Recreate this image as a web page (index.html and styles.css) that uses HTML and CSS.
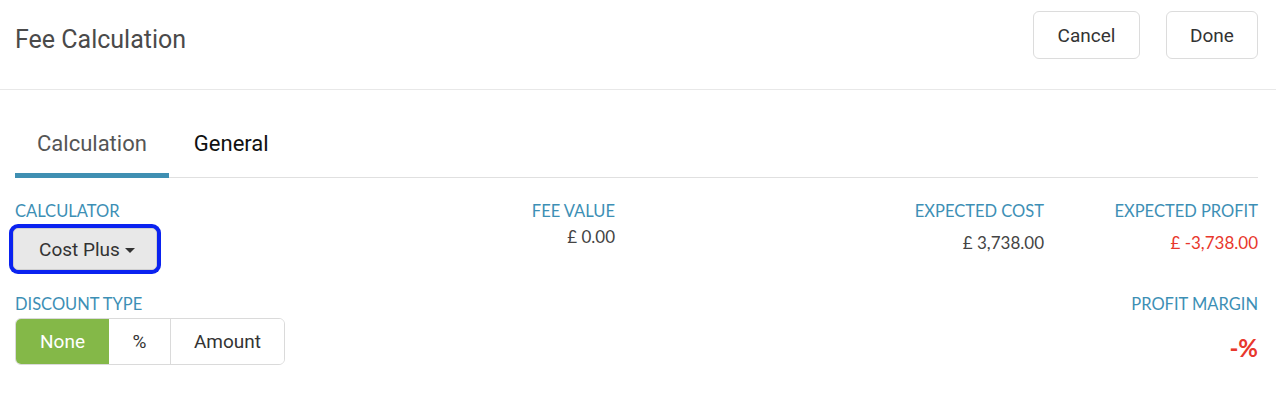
FILE: index.html
```html
<!DOCTYPE html>
<html>
<head>
<meta charset="utf-8">
<link rel="stylesheet" href="styles.css">
</head>
<body>
<header class="header">
  <h1 class="title">Fee Calculation</h1>
  <div class="actions">
    <button class="btn btn-cancel">Cancel</button>
    <button class="btn btn-done">Done</button>
  </div>
</header>
<main class="main">
  <nav class="tabs">
    <div class="tab active">Calculation</div>
    <div class="tab">General</div>
  </nav>
  <section class="grid">
    <div class="field calc">
      <div class="label">CALCULATOR</div>
      <button class="select">Cost Plus<span class="caret"></span></button>
    </div>
    <div class="field fee right">
      <div class="label">FEE VALUE</div>
      <div class="value value-fee">£ 0.00</div>
    </div>
    <div class="field cost right">
      <div class="label">EXPECTED COST</div>
      <div class="value value-low">£ 3,738.00</div>
    </div>
    <div class="field profit right">
      <div class="label">EXPECTED PROFIT</div>
      <div class="value value-low red">£ -3,738.00</div>
    </div>
    <div class="field discount">
      <div class="label">DISCOUNT TYPE</div>
      <div class="seg">
        <div class="seg-item seg-none on">None</div>
        <div class="seg-item seg-pct">%</div>
        <div class="seg-item seg-amt">Amount</div>
      </div>
    </div>
    <div class="field margin right">
      <div class="label">PROFIT MARGIN</div>
      <div class="margin-value">-%</div>
    </div>
  </section>
</main>
</body>
</html>
```
FILE: styles.css
```css
* { box-sizing: border-box; }
html, body { margin: 0; padding: 0; background: #fff; }
body { font-family: Roboto, "Noto Sans", sans-serif; color: #333; width: 1276px; }

.header {
  height: 90px;
  border-bottom: 1px solid #e8e8e8;
  display: flex;
  justify-content: space-between;
  align-items: flex-start;
  padding: 11px 18px 0 15px;
}
.title {
  margin: 13px 0 0 0;
  font-size: 25px;
  line-height: 32px;
  font-weight: 400;
  color: #4a4a4a;
}
.actions { display: flex; gap: 26px; }
.btn {
  font-family: Roboto, sans-serif;
  font-size: 19px;
  height: 48px;
  background: #fff;
  border: 1px solid #dcdcdc;
  border-radius: 6px;
  color: #333;
  padding: 0;
}
.btn-cancel { width: 107px; }
.btn-done { width: 92px; }

.main { padding: 0 18px 0 15px; }
.tabs {
  display: flex;
  border-bottom: 1px solid #e0e0e0;
}
.tab {
  font-size: 22px;
  line-height: 26px;
  padding: 41px 22px 16px 22px;
  border-bottom: 5px solid transparent;
  margin-bottom: -1px;
  color: #111;
}
.tab.active { color: #555; border-bottom-color: #3f8fb2; }
.tab + .tab { margin-left: 3px; }

.grid {
  display: grid;
  grid-template-columns: 300px 300px 1fr 214px;
  padding-top: 24px;
  font-family: Lato, "Noto Sans", sans-serif;
}
.right { text-align: right; }
.fee { grid-column: 2; }
.cost { grid-column: 3; }
.profit { grid-column: 4; }
.discount { grid-column: 1 / span 2; margin-top: 25px; }
.margin { grid-column: 4; margin-top: 25px; }

.label {
  font-size: 16.5px;
  line-height: 18px;
  color: #3d8fb5;
}
.value {
  font-size: 17px;
  line-height: 20px;
  color: #444;
}
.value-fee { margin-top: 7px; }
.value-low { margin-top: 13px; }
.red { color: #e8372c; }

.select {
  margin: 8px 0 0 -2px;
  width: 144px;
  height: 42px;
  background: #e8e8e8;
  border: 1px solid #cfcfcf;
  border-radius: 5px;
  box-shadow: 0 0 0 4px #0a22f0;
  font-family: Roboto, sans-serif;
  font-size: 19px;
  color: #333;
  padding: 0 0 0 4px;
  display: flex;
  align-items: center;
  justify-content: center;
}
.caret {
  display: inline-block;
  width: 0; height: 0;
  border-left: 5px solid transparent;
  border-right: 5px solid transparent;
  border-top: 5px solid #333;
  margin-left: 5px;
  margin-top: 2px;
}

.seg {
  margin-top: 5px;
  display: flex;
  width: 270px;
  height: 47px;
  border: 1px solid #dadada;
  border-radius: 6px;
  overflow: hidden;
  font-family: Roboto, sans-serif;
  font-size: 19px;
}
.seg-item {
  display: flex;
  align-items: center;
  justify-content: center;
  color: #333;
  background: #fff;
}
.seg-none { width: 93px; }
.seg-pct { width: 62px; border-right: 1px solid #dadada; }
.seg-amt { flex: 1; }
.seg-item.on { background: #84b848; color: #fff; }

.margin-value {
  margin-top: 21px;
  font-size: 24px;
  line-height: 28px;
  font-weight: 700;
  color: #e8372c;
}
```
